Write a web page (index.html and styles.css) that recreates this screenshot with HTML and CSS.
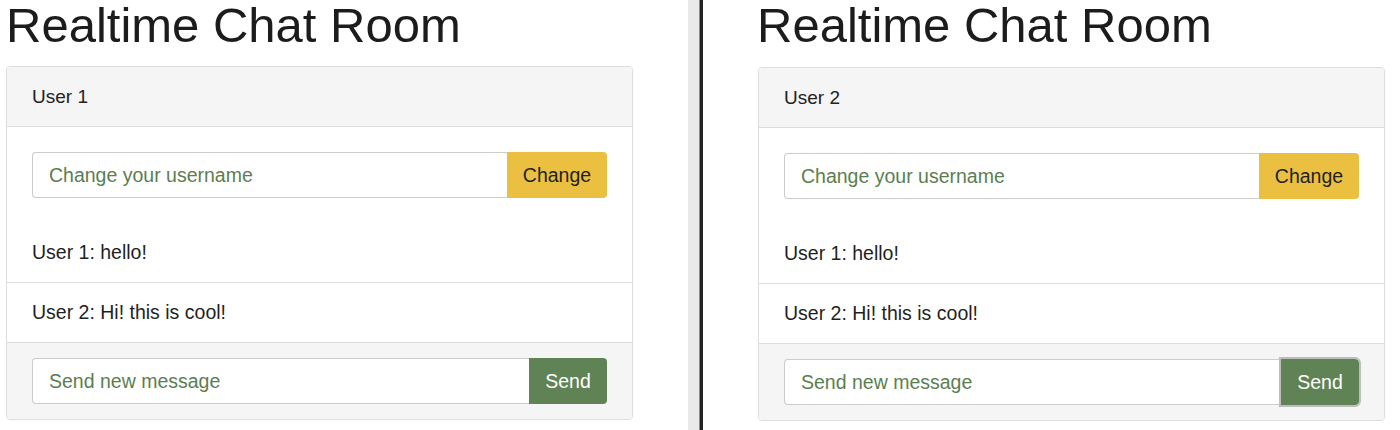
FILE: index.html
```html
<!DOCTYPE html>
<html>
<head>
<meta charset="utf-8">
<link rel="stylesheet" href="styles.css">
<title>Realtime Chat Room</title>
</head>
<body>
<div class="screen">
  <section class="pane pane-left">
    <h1 class="title">Realtime Chat Room</h1>
    <div class="card">
      <div class="card-header">User 1</div>
      <div class="card-body">
        <div class="input-group">
          <input class="field" type="text" placeholder="Change your username">
          <button class="btn btn-change">Change</button>
        </div>
      </div>
      <ul class="messages">
        <li class="message">User 1: hello!</li>
        <li class="message">User 2: Hi! this is cool!</li>
      </ul>
      <div class="card-footer">
        <div class="input-group">
          <input class="field" type="text" placeholder="Send new message">
          <button class="btn btn-send">Send</button>
        </div>
      </div>
    </div>
  </section>
  <div class="divider"></div>
  <section class="pane pane-right">
    <h1 class="title">Realtime Chat Room</h1>
    <div class="card card-shifted">
      <div class="card-header">User 2</div>
      <div class="card-body">
        <div class="input-group">
          <input class="field" type="text" placeholder="Change your username">
          <button class="btn btn-change">Change</button>
        </div>
      </div>
      <ul class="messages">
        <li class="message">User 1: hello!</li>
        <li class="message">User 2: Hi! this is cool!</li>
      </ul>
      <div class="card-footer">
        <div class="input-group">
          <input class="field" type="text" placeholder="Send new message">
          <button class="btn btn-send btn-focused">Send</button>
        </div>
      </div>
    </div>
  </section>
</div>
</body>
</html>
```
FILE: styles.css
```css
* { box-sizing: border-box; }

html, body {
  margin: 0;
  padding: 0;
  background: #ffffff;
}

body {
  font-family: "Liberation Sans", Arial, sans-serif;
  color: #222222;
  width: 1400px;
  height: 430px;
  overflow: hidden;
}

.screen {
  display: flex;
  height: 430px;
}

.pane {
  flex: none;
}

.pane-left {
  width: 688px;
  padding-left: 6px;
}

.pane-right {
  width: 697px;
  padding-left: 55px;
}

.divider {
  flex: none;
  width: 15px;
  height: 430px;
  border-left: 11px solid #e9e9e9;
  background: #222222;
  box-shadow: inset 1px 0 0 #8a8a8a;
}

.title {
  margin: 1px 0 0 0;
  font-size: 49px;
  line-height: 49px;
  font-weight: normal;
  color: #1c1c1c;
  white-space: nowrap;
}

.pane-right .title {
  margin-left: -1px;
}

.card {
  width: 627px;
  margin-top: 16px;
  border: 1px solid #dddddd;
  border-radius: 4px;
  background: #ffffff;
  overflow: hidden;
}

.card-shifted {
  margin-top: 17px;
}

.card-header {
  height: 60px;
  padding: 0 25px;
  display: flex;
  align-items: center;
  background: #f5f5f5;
  border-bottom: 1px solid #dddddd;
  font-size: 19px;
}

.card-body {
  padding: 25px 25px 0;
}

.input-group {
  display: flex;
  height: 46px;
}

.field {
  flex: 1;
  min-width: 0;
  height: 46px;
  margin: 0;
  padding: 0 16px;
  border: 1px solid #cccccc;
  border-right: none;
  border-radius: 4px 0 0 4px;
  font-family: "Liberation Sans", Arial, sans-serif;
  font-size: 19.5px;
  color: #333333;
  background: #ffffff;
  outline: none;
}

.field::placeholder {
  color: #5b7e50;
  opacity: 1;
}

.btn {
  flex: none;
  height: 46px;
  margin: 0;
  padding: 0;
  border: none;
  border-radius: 0 4px 4px 0;
  font-family: "Liberation Sans", Arial, sans-serif;
  font-size: 19.5px;
  cursor: pointer;
}

.btn-change {
  width: 100px;
  background: #ebbf40;
  color: #1f1f1f;
}

.btn-send {
  width: 78px;
  background: #5f8355;
  color: #ffffff;
}

.btn-focused {
  outline: 2px solid #bdbdbd;
  outline-offset: 0;
}

.messages {
  list-style: none;
  margin: 24px 0 0;
  padding: 0;
}

.message {
  height: 60px;
  padding: 0 25px;
  display: flex;
  align-items: center;
  font-size: 19.5px;
  color: #1f1f1f;
}

.message + .message {
  border-top: 1px solid #dddddd;
  height: 60px;
}

.card-footer {
  padding: 15px 25px;
  background: #f5f5f5;
  border-top: 1px solid #dddddd;
}
```
